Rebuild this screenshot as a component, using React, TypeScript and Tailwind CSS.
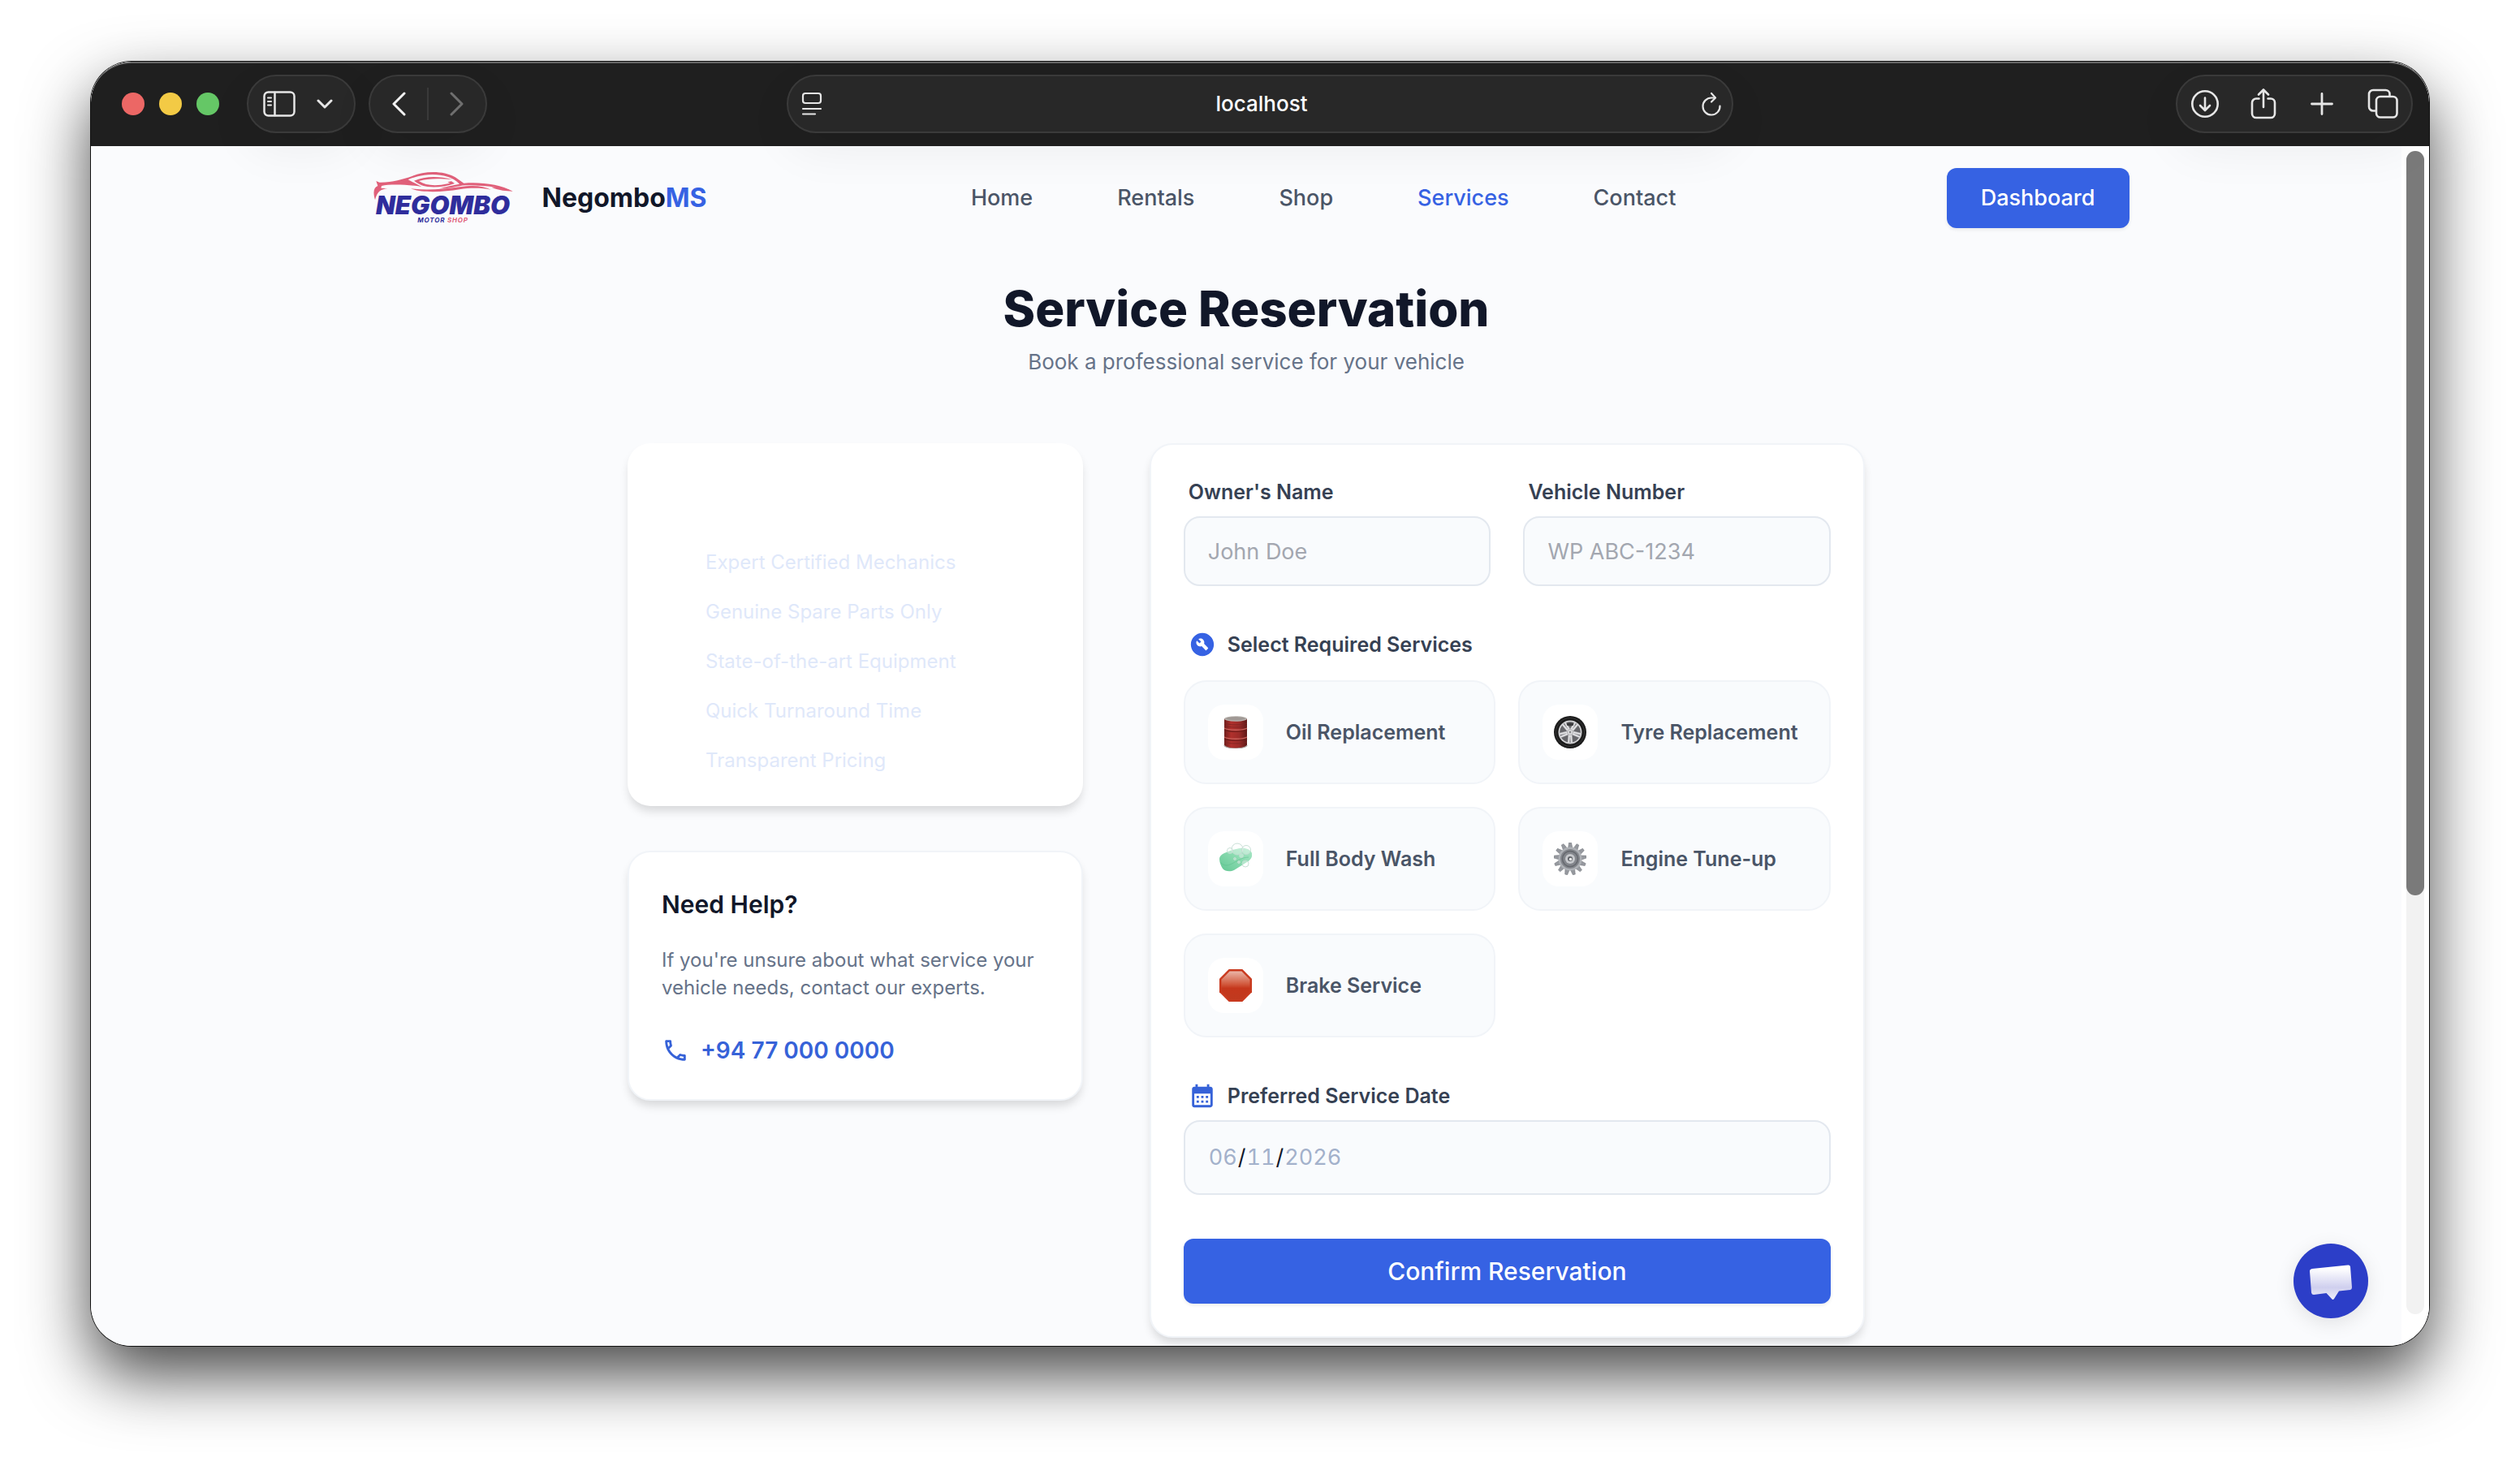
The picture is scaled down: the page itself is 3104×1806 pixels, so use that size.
import React, { useState } from "react";
import { MdBuildCircle, MdCalendarMonth, MdOutlinePhone } from "react-icons/md";

const navLinks = ["Home", "Rentals", "Shop", "Services", "Contact"];

const benefits = [
  "Expert Certified Mechanics",
  "Genuine Spare Parts Only",
  "State-of-the-art Equipment",
  "Quick Turnaround Time",
  "Transparent Pricing",
];

const services = [
  { id: "oil", label: "Oil Replacement", icon: <OilDrumIcon /> },
  { id: "tyre", label: "Tyre Replacement", icon: <TyreIcon /> },
  { id: "wash", label: "Full Body Wash", icon: <SoapIcon /> },
  { id: "engine", label: "Engine Tune-up", icon: <GearIcon /> },
  { id: "brake", label: "Brake Service", icon: <StopIcon /> },
];

function OilDrumIcon() {
  return (
    <svg viewBox="0 0 40 40" className="h-10 w-10" aria-hidden="true">
      <defs>
        <linearGradient id="drum" x1="0" x2="1">
          <stop offset="0" stopColor="#6f1f1d" />
          <stop offset="0.3" stopColor="#b0302c" />
          <stop offset="0.65" stopColor="#9c2b28" />
          <stop offset="1" stopColor="#5e1a18" />
        </linearGradient>
      </defs>
      <path d="M6 3v33c0 2 6 4 14 4s14-2 14-4V3z" fill="url(#drum)" />
      <ellipse cx="20" cy="3.5" rx="14" ry="3.3" fill="#b9b3ae" />
      <ellipse cx="20" cy="3.3" rx="12" ry="2.2" fill="#a09995" />
      <path d="M6 15c5 3 23 3 28 0M6 26c5 3 23 3 28 0" fill="none" stroke="#c9615b" strokeWidth="1.4" />
      <path d="M6 17c5 3 23 3 28 0M6 28c5 3 23 3 28 0" fill="none" stroke="#6b1d1b" strokeWidth="1.2" />
      <path d="M6 9c5 2.500 23 2.500 28 0M6 12c5 2.500 23 2.500 28 0M6 32c5 2.500 23 2.500 28 0" fill="none" stroke="#7f2522" strokeWidth="0.8" />
      <path d="M6 36c0 2 6 4 14 4s14-2 14-4" fill="none" stroke="#a89f9b" strokeWidth="1.200" />
    </svg>
  );
}

function TyreIcon() {
  const spokes = [0, 72, 144, 216, 288];
  return (
    <svg viewBox="0 0 40 40" className="h-10 w-10" aria-hidden="true">
      <circle cx="20" cy="20" r="20" fill="#1b1b1b" />
      <circle cx="20" cy="20" r="17.500" fill="none" stroke="#363636" strokeWidth="1" />
      <circle cx="20" cy="20" r="14.500" fill="#d6d6d8" />
      <circle cx="20" cy="20" r="12.800" fill="#66666a" />
      {spokes.map((angle) => (
        <path key={angle} d="M18 20 17 33.500h2.200L20 25l0.800 8.500H23L22 20z" fill="#e2e2e4" stroke="#b0b0b3" strokeWidth="0.400" transform={`rotate(${angle} 20 20)`} />
      ))}
      <circle cx="20" cy="20" r="3.600" fill="#dedee0" stroke="#98989b" strokeWidth="0.700" />
      <circle cx="20" cy="20" r="1.400" fill="#8d8d90" />
      <path d="M15.500 9.500c3-1.500 6-1.500 9 0l-1 2.500h-7z" fill="#39393b" />
    </svg>
  );
}

function SoapIcon() {
  return (
    <svg viewBox="0 0 40 40" className="h-10 w-10" aria-hidden="true">
      <defs>
        <linearGradient id="soap" x1="0" y1="1" x2="1" y2="0">
          <stop offset="0" stopColor="#63c794" />
          <stop offset="0.6" stopColor="#8ddcb2" />
          <stop offset="1" stopColor="#a9e6c6" />
        </linearGradient>
      </defs>
      <path d="M0 20c0-3 2-5 6-7 6-3 12-5 19-6 7-1 13 1 15 6 1 4-1 8-6 11L18 34c-4 2-11 2-14-2C2 29 0 24 0 20z" fill="url(#soap)" />
      <path d="M1 24c3 4 8 5 12 3 8-3 14-9 23-9" fill="none" stroke="#5abd8c" strokeWidth="1" opacity="0.5" />
      <g fill="#ffffff" fillOpacity="0.350" stroke="#c3dbd1" strokeWidth="0.900">
        <circle cx="22" cy="8" r="7" />
        <circle cx="33" cy="9" r="5.500" />
        <circle cx="13" cy="10" r="3.500" />
        <circle cx="32" cy="26" r="4" />
        <circle cx="27" cy="16" r="2.500" />
        <circle cx="19" cy="20" r="1.500" />
        <circle cx="24" cy="24" r="1.500" />
      </g>
    </svg>
  );
}

function GearIcon() {
  const teeth = [0, 28, 55, 83, 111, 138, 166, 194, 222, 249, 277, 305, 332];
  return (
    <svg viewBox="0 0 40 40" className="h-10 w-10" aria-hidden="true">
      {teeth.map((angle) => (
        <path key={angle} d="M17.500 7 18.500 0h3l1.500 7z" fill="#96999f" stroke="#75787e" strokeWidth="0.500" transform={`rotate(${angle} 20 20)`} />
      ))}
      <circle cx="20" cy="20" r="14.500" fill="#aeb1b6" />
      <circle cx="20" cy="20" r="12" fill="#83868c" />
      <circle cx="20" cy="20" r="9.500" fill="none" stroke="#65686e" strokeWidth="1.500" />
      <circle cx="20" cy="20" r="6" fill="#c6c8cc" />
      <circle cx="20" cy="20" r="3" fill="#5c5f65" />
      <circle cx="20.500" cy="20.500" r="1.800" fill="#eceded" />
    </svg>
  );
}

function StopIcon() {
  return (
    <svg viewBox="0 0 40 40" className="h-10 w-10" aria-hidden="true">
      <defs>
        <linearGradient id="stop" x1="0" x2="0" y1="0" y2="1">
          <stop offset="0" stopColor="#eab5a7" />
          <stop offset="0.45" stopColor="#d25a3e" />
          <stop offset="0.6" stopColor="#c5371c" />
          <stop offset="1" stopColor="#c03a1f" />
        </linearGradient>
      </defs>
      <path d="M11.700 0h16.600L40 11.700v16.600L28.300 40H11.700L0 28.300V11.700z" fill="#c93a1f" />
      <path d="M12.700 2.500h14.600l10.200 10.200v14.600L27.300 37.500H12.700L2.500 27.300V12.700z" fill="url(#stop)" />
    </svg>
  );
}

function Logo() {
  return (
    <div className="flex w-[196px] flex-col items-center">
      <svg viewBox="60 62 520 90" className="h-[30px] w-[174px] overflow-visible" fill="#e0607a" aria-hidden="true">
        <path d="M72 98 84 103C130 104 170 92 205 80 250 60 320 58 364 84L396 106C460 101 530 110 577 136 540 124 470 112 402 114 372 116 350 126 306 126 336 118 360 112 380 109 350 78 300 70 250 76 225 80 205 86 190 93L240 119C180 110 120 110 92 116L90 124 114 126C92 128 76 134 68 168 60 140 62 122 78 116z" />
        <path d="M212 97C250 80 300 78 354 92 300 88 262 88 230 98 250 112 280 116 312 112L345 106 336 102 350 99 362 107C330 119 290 123 262 119 240 115 226 108 212 97z" />
        <path d="M200 126C260 134 320 128 380 120 430 112 470 116 496 130 460 123 420 123 380 129 320 139 240 143 200 126z" />
        <path d="M498 121C530 118 550 124 577 136 550 133 530 135 498 121z" />
      </svg>
      <span className="text-[31px] leading-6 font-black italic text-[#2f2d9c]">NEGOMBO</span>
      <span className="text-[8px] leading-3 font-bold italic tracking-widest text-[#2f2d9c]">
        MOTOR <span className="text-[#e0607a]">SHOP</span>
      </span>
    </div>
  );
}

function Toolbar() {
  const pill =
    "flex h-[72px] items-center rounded-full border-2 border-[#3a3a3a] bg-[#282828] shadow-[0_20px_60px_rgba(0,0,0,0.06)]";

  return (
    <div className="relative z-10 grid h-[104px] grid-cols-[1fr_minmax(0,1166px)_1fr] items-center rounded-t-[50px] border-t-2 border-[#666666] bg-[#1f1f1f] px-5 pb-0.5 text-[#e6e6e6]">
      <div className="flex items-center pl-[18px]">
        <div className="flex gap-[18px]">
          <span className="h-7 w-7 rounded-full bg-[#ec6765]" />
          <span className="h-7 w-7 rounded-full bg-[#f3ca45]" />
          <span className="h-7 w-7 rounded-full bg-[#65c766]" />
        </div>
        <div className={`${pill} ml-[34px] w-[134px] gap-[26px] pl-[18px]`}>
          <button aria-label="Show sidebar">
            <svg viewBox="0 0 40 32" className="h-8 w-10" fill="none" stroke="currentColor" strokeWidth="2.500" strokeLinecap="round">
              <rect x="1.500" y="1.500" width="37" height="29" rx="5" />
              <path d="M14.500 2v28" />
              <path d="M6 8.500h4M6 13h4M6 17.500h4" strokeWidth="2" />
            </svg>
          </button>
          <button aria-label="Sidebar options">
            <svg viewBox="0 0 20 12" className="h-3 w-5" fill="none" stroke="currentColor" strokeWidth="3" strokeLinecap="round" strokeLinejoin="round">
              <path d="M2 2l8 8 8-8" />
            </svg>
          </button>
        </div>
        <div className={`${pill} ml-4 w-[146px] justify-between px-[26px]`}>
          <button aria-label="Back">
            <svg viewBox="0 0 18 30" className="h-[30px] w-[18px]" fill="none" stroke="#f2f2f2" strokeWidth="3" strokeLinecap="round" strokeLinejoin="round">
              <path d="M16 2 3 15l13 13" />
            </svg>
          </button>
          <span className="h-10 w-0.5 bg-[#3a3a3a]" />
          <button aria-label="Forward">
            <svg viewBox="0 0 18 30" className="h-[30px] w-[18px]" fill="none" stroke="#6f6f6f" strokeWidth="3" strokeLinecap="round" strokeLinejoin="round">
              <path d="M2 2l13 13L2 28" />
            </svg>
          </button>
        </div>
      </div>

      <div className={`${pill} justify-between px-3`}>
        <button aria-label="Page menu" className="pl-1">
          <svg viewBox="0 0 26 30" className="h-[30px] w-[26px]" fill="none" stroke="currentColor" strokeWidth="2.200" strokeLinecap="round">
            <rect x="2" y="2" width="22" height="12" rx="3" />
            <path d="M2 21h22M2 27.500h15" />
          </svg>
        </button>
        <span className="text-[26px] leading-8 font-medium text-white">localhost</span>
        <button aria-label="Reload">
          <svg viewBox="0 0 26 30" className="h-[30px] w-[26px]" fill="none" stroke="currentColor" strokeWidth="2.200" strokeLinecap="round" strokeLinejoin="round">
            <path d="M23.500 17.500A10.500 10.500 0 1 1 13 7.500h4.500" />
            <path d="M13 2l5 5.500-5 5" />
          </svg>
        </button>
      </div>

      <div className={`${pill} w-[292px] justify-between justify-self-end px-4`}>
        <button aria-label="Downloads">
          <svg viewBox="0 0 36 36" className="h-9 w-9" fill="none" stroke="currentColor" strokeWidth="2.600" strokeLinecap="round" strokeLinejoin="round">
            <circle cx="18" cy="18" r="15.700" />
            <path d="M18 10.500v15M12 20l6 6 6-6" />
          </svg>
        </button>
        <button aria-label="Share" className="pr-1">
          <svg viewBox="0 0 32 40" className="h-10 w-8" fill="none" stroke="currentColor" strokeWidth="2.600" strokeLinecap="round" strokeLinejoin="round">
            <path d="M10.500 13.500H7a5 5 0 0 0-5 5V32a5 5 0 0 0 5 5h18a5 5 0 0 0 5-5V18.500a5 5 0 0 0-5-5h-3.500" />
            <path d="M16 24V3M10 8.500l6-6 6 6" />
          </svg>
        </button>
        <button aria-label="New tab" className="pr-1">
          <svg viewBox="0 0 28 28" className="h-7 w-7" fill="none" stroke="currentColor" strokeWidth="2.800" strokeLinecap="round">
            <path d="M14 1.500v25M1.500 14h25" />
          </svg>
        </button>
        <button aria-label="Tab overview">
          <svg viewBox="0 0 38 38" className="h-[38px] w-[38px]" fill="none" stroke="currentColor" strokeWidth="2.600" strokeLinejoin="round">
            <rect x="11" y="10" width="25.500" height="25.500" rx="5" />
            <path d="M11 27.500H7a5 5 0 0 1-5-5V7a5 5 0 0 1 5-5h15.500a5 5 0 0 1 5 5v3" />
          </svg>
        </button>
      </div>
    </div>
  );
}

function Header() {
  return (
    <header className="mx-auto flex h-32 w-full max-w-[2175px] items-center justify-between">
      <div className="flex items-center gap-6">
        <Logo />
        <span className="text-[32px] leading-10 font-bold text-[#111729]">
          Negombo<span className="text-[#3662e3]">MS</span>
        </span>
      </div>
      <nav className="flex gap-[104px] pr-2">
        {navLinks.map((link) => (
          <a
            key={link}
            href="#"
            className={`text-[27px] leading-9 font-medium ${link === "Services" ? "text-[#3662e3]" : "text-[#4a5567]"}`}
          >
            {link}
          </a>
        ))}
      </nav>
      <button className="h-[74px] rounded-xl bg-[#3662e3] px-[42px] text-[27px] leading-9 font-medium text-white shadow-[0_2px_4px_rgba(0,0,0,0.08)]">
        Dashboard
      </button>
    </header>
  );
}

function InfoColumn() {
  return (
    <div className="flex flex-col gap-[55px]">
      <div className="rounded-[28px] bg-white pt-[116px] pb-[26px] pl-24 shadow-[0_8px_12px_-2px_rgba(0,0,0,0.14)]">
        <ul>
          {benefits.map((benefit) => (
            <li key={benefit} className="py-[14px] text-[24px] leading-[33px] text-[#dfe8fa]">
              {benefit}
            </li>
          ))}
        </ul>
      </div>

      <div className="rounded-[28px] border-2 border-[#f1f4f8] bg-white px-10 pt-11 pb-10 shadow-[0_8px_12px_-2px_rgba(0,0,0,0.14)]">
        <h2 className="text-[30px] leading-10 font-semibold text-[#111729]">Need Help?</h2>
        <p className="mt-8 text-[24px] leading-[34px] text-[#667389]">
          If you're unsure about what service your vehicle needs, contact our experts.
        </p>
        <a href="tel:+94770000000" className="mt-10 flex items-center gap-[14px] text-[28px] leading-10 font-semibold text-[#3662d8]">
          <MdOutlinePhone size={34} />
          +94 77 000 0000
        </a>
      </div>
    </div>
  );
}

function ReservationForm() {
  const [selected, setSelected] = useState<string[]>([]);

  const toggle = (id: string) => {
    setSelected((prev) => (prev.includes(id) ? prev.filter((s) => s !== id) : [...prev, id]));
  };

  const labelClass = "flex items-center gap-[14px] px-[6px] text-[25px] leading-9 font-semibold text-[#364153]";
  const inputClass =
    "mt-3 w-full rounded-[20px] border-2 border-[#e3e8ef] bg-[#f9fbfd] px-7 font-normal outline-none";

  return (
    <form
      onSubmit={(e) => e.preventDefault()}
      className="rounded-[28px] border-2 border-[#f1f4f8] bg-white p-10 shadow-[0_8px_12px_-2px_rgba(0,0,0,0.14)]"
    >
      <div className="grid grid-cols-2 gap-10">
        <div>
          <label htmlFor="owner" className={labelClass}>Owner's Name</label>
          <input id="owner" type="text" placeholder="John Doe" className={`${inputClass} h-[86px] text-[27px] placeholder:text-[#a3a7b0]`} />
        </div>
        <div>
          <label htmlFor="vehicle" className={labelClass}>Vehicle Number</label>
          <input id="vehicle" type="text" placeholder="WP ABC-1234" className={`${inputClass} h-[86px] text-[27px] placeholder:text-[#a3a7b0]`} />
        </div>
      </div>

      <fieldset className="mt-[54px]">
        <legend className={labelClass}>
          <MdBuildCircle size={34} className="text-[#3662e3]" />
          Select Required Services
        </legend>
        <div className="mt-[26px] grid grid-cols-2 gap-7">
          {services.map((service) => (
            <button
              key={service.id}
              type="button"
              aria-pressed={selected.includes(service.id)}
              onClick={() => toggle(service.id)}
              className={`flex h-32 items-center gap-7 rounded-[28px] border-2 px-7 text-[25px] leading-9 font-semibold text-[#4a5567] ${
                selected.includes(service.id) ? "border-[#3662e3] bg-blue-50" : "border-[#f1f4f8] bg-[#f9fbfd]"
              }`}
            >
              <span className="flex h-[68px] w-[68px] shrink-0 items-center justify-center rounded-[20px] bg-white">
                {service.icon}
              </span>
              {service.label}
            </button>
          ))}
        </div>
      </fieldset>

      <div className="mt-[54px]">
        <label htmlFor="date" className={labelClass}>
          <MdCalendarMonth size={34} className="text-[#3662d8]" />
          Preferred Service Date
        </label>
        <input
          id="date"
          type="date"
          defaultValue="2026-06-11"
          className={`${inputClass} h-[92px] text-[27px] tabular-nums text-[#111729] [&::-webkit-calendar-picker-indicator]:hidden [&::-webkit-datetime-edit-day-field]:text-[#a3b1cb] [&::-webkit-datetime-edit-month-field]:text-[#a3b1cb] [&::-webkit-datetime-edit-year-field]:text-[#a3b1cb]`}
        />
      </div>

      <button
        type="submit"
        className="mt-[54px] h-20 w-full rounded-xl bg-[#3662e3] text-[30px] leading-10 font-medium text-white shadow-[0_2px_4px_rgba(0,0,0,0.08)]"
      >
        Confirm Reservation
      </button>
    </form>
  );
}

function ChatButton() {
  return (
    <button
      aria-label="Open chat"
      className="absolute right-[75px] bottom-[34px] h-[92px] w-[92px] rounded-full bg-[#2c3ec8] shadow-[0_6px_24px_rgba(0,0,0,0.1)]"
    >
      <svg viewBox="0 0 92 92" className="h-full w-full" aria-hidden="true">
        <defs>
          <linearGradient id="bubble" x1="0" x2="0" y1="0" y2="1">
            <stop offset="0.1" stopColor="#ffffff" />
            <stop offset="0.65" stopColor="#cfcfee" />
            <stop offset="1" stopColor="#efeffa" />
          </linearGradient>
        </defs>
        <path d="M23 31 67 26.500Q69.500 26 70 28.500L72 54Q72 56.500 70 57L56 58.500 50 68Q48.500 70 47 68L40.500 61 25 63Q22.500 63 22 60.500L20 34Q20 31.500 23 31z" fill="url(#bubble)" />
      </svg>
    </button>
  );
}

export default function App() {
  return (
    <div className="min-h-screen overflow-hidden bg-white px-28 pt-[76px] pb-[148px] font-['Inter','Liberation_Sans',sans-serif]">
      <div className="relative rounded-[50px] shadow-[0_0_0_1px_#111111,0_36px_80px_rgba(0,0,0,0.72)]">
        <div className="overflow-hidden rounded-[50px] bg-[#fafbfd]">
          <Toolbar />
          <div className="flex">
            <main className="min-w-0 flex-1 pb-[10px]">
              <Header />
              <div className="pt-9 text-center">
                <h1 className="text-[60px] leading-[72px] font-extrabold text-[#111729]">Service Reservation</h1>
                <p className="mt-[10px] text-[26px] leading-10 text-[#667389]">Book a professional service for your vehicle</p>
              </div>
              <div className="mx-auto mt-20 grid max-w-[1524px] grid-cols-[7fr_11fr] items-start gap-[82px]">
                <InfoColumn />
                <ReservationForm />
              </div>
            </main>
            <div className="flex w-[34px] flex-col items-center bg-white pt-[6px] pb-[39px]">
              <div className="w-[22px] flex-1 rounded-full bg-[#f2f2f2]">
                <div className="h-[64%] w-full rounded-full bg-[#7a7a7a]" />
              </div>
            </div>
          </div>
        </div>
        <ChatButton />
      </div>
    </div>
  );
}
